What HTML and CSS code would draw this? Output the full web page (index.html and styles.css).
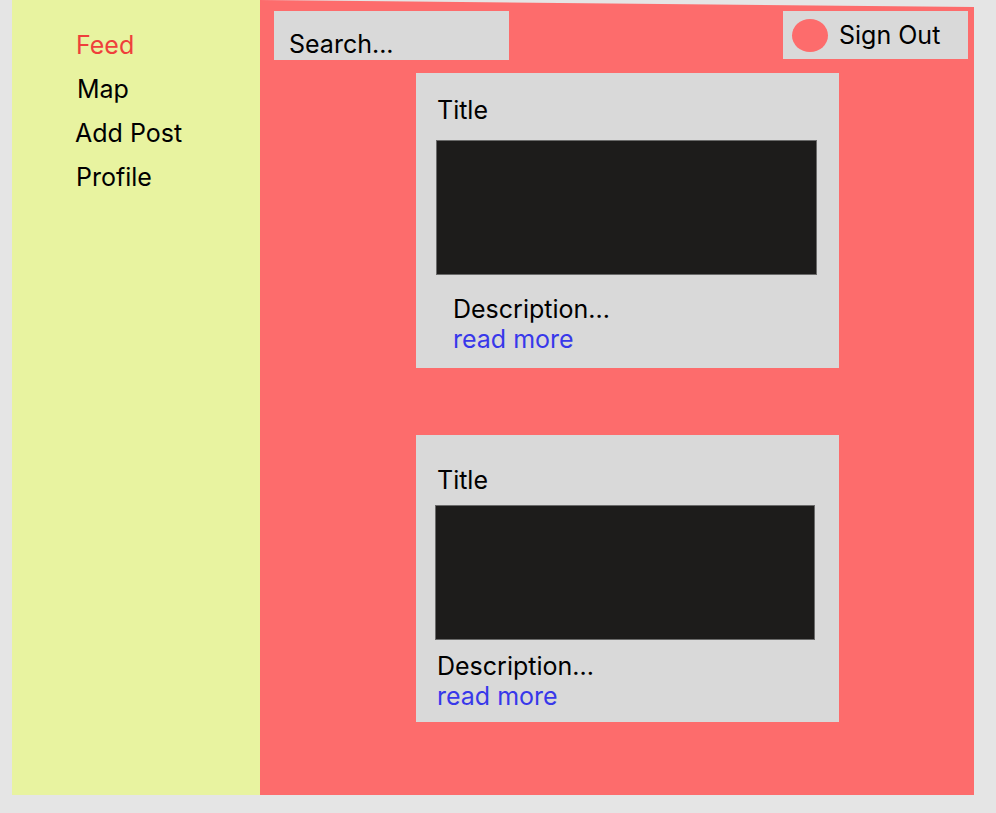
FILE: index.html
```html
<!DOCTYPE html>
<html lang="en">
<head>
<meta charset="utf-8">
<title>Feed</title>
<link rel="stylesheet" href="styles.css">
</head>
<body>
<div class="app">
  <nav class="sidebar">
    <a class="nav-item active" href="#">Feed</a>
    <a class="nav-item nav-map" href="#">Map</a>
    <a class="nav-item nav-add" href="#">Add Post</a>
    <a class="nav-item" href="#">Profile</a>
  </nav>
  <main class="main">
    <header class="topbar">
      <div class="search">Search...</div>
      <button class="signout"><span class="avatar"></span><span>Sign Out</span></button>
    </header>
    <section class="feed">
      <article class="card card-one">
        <h2 class="card-title">Title</h2>
        <div class="card-image"></div>
        <div class="card-body">
          <p class="card-desc">Description...</p>
          <a class="card-more" href="#">read more</a>
        </div>
      </article>
      <article class="card card-two">
        <h2 class="card-title">Title</h2>
        <div class="card-image"></div>
        <div class="card-body">
          <p class="card-desc">Description...</p>
          <a class="card-more" href="#">read more</a>
        </div>
      </article>
    </section>
  </main>
</div>
</body>
</html>
```

FILE: styles.css
```css
* { box-sizing: border-box; }
html, body { margin: 0; padding: 0; }
body {
  background: #e5e5e5;
  font-family: Inter, "Noto Sans", sans-serif;
  font-size: 25px;
  color: #000;
  width: 996px;
  height: 813px;
  overflow: hidden;
}
.app {
  display: flex;
  margin-left: 12px;
  width: 962px;
  height: 795px;
}
.sidebar {
  width: 248px;
  background: #e8f3a0;
  display: flex;
  flex-direction: column;
  padding: 23px 0 0 64px;
}
.nav-item {
  display: block;
  line-height: 44px;
  color: #000;
  text-decoration: none;
}
.nav-item.active { color: #ef3f3b; }
.nav-map { margin-left: 1px; }
.nav-add { margin-left: -1px; }
.main {
  width: 714px;
  background: #fd6c6c;
  clip-path: polygon(0 0, 100% 7px, 100% 100%, 0 100%);
  padding: 11px 6px 0 14px;
}
.topbar {
  display: flex;
  justify-content: space-between;
  align-items: flex-start;
}
.search {
  width: 235px;
  height: 49px;
  background: #d9d9d9;
  padding: 19px 0 0 15px;
  line-height: 29px;
}
.signout {
  width: 185px;
  height: 48px;
  background: #d9d9d9;
  border: 0;
  margin: 0;
  padding: 0 0 0 9px;
  display: flex;
  align-items: center;
  gap: 11px;
  font: inherit;
  line-height: 29px;
  color: #000;
}
.avatar {
  width: 36px;
  height: 33px;
  border-radius: 50%;
  background: #fd6c6c;
  flex: none;
}
.feed {
  display: flex;
  flex-direction: column;
  margin: 13px 0 0 142px;
  gap: 67px;
}
.card {
  width: 423px;
  background: #d9d9d9;
  display: flex;
  flex-direction: column;
}
.card-title {
  margin: 0;
  font-size: 25px;
  font-weight: 400;
  line-height: 29px;
}
.card-image {
  background: #1d1c1b;
  border: 1px solid #6a6a6a;
  height: 135px;
}
.card-desc {
  margin: 0;
  line-height: 30px;
}
.card-more {
  display: block;
  line-height: 30px;
  color: #3838ea;
  text-decoration: none;
}
.card-one { padding: 23px 22px 14px 20px; }
.card-one .card-title { margin: 0 0 15px 1px; }
.card-one .card-image { width: 381px; }
.card-one .card-body { margin: 19px 0 0 17px; }
.card-two { padding: 31px 24px 11px 19px; }
.card-two .card-title { margin: 0 0 10px 2px; }
.card-two .card-image { width: 380px; }
.card-two .card-body { margin: 11px 0 0 2px; }
```
